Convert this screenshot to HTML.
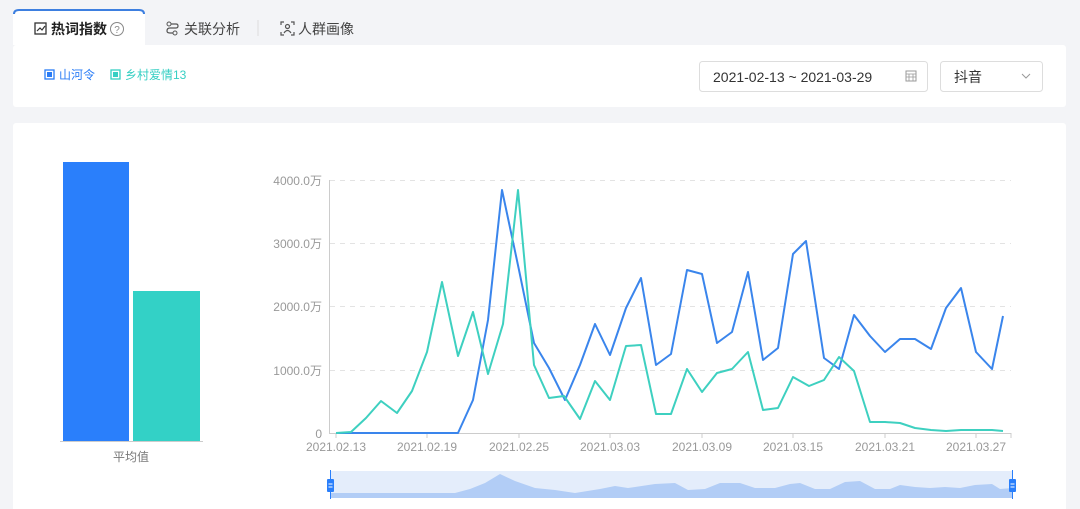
<!DOCTYPE html>
<html><head><meta charset="utf-8"><style>
*{margin:0;padding:0;box-sizing:border-box}
body{width:1080px;height:509px;background:#f3f4f7;font-family:"Liberation Sans","Noto Sans CJK SC",sans-serif;overflow:hidden;position:relative}
</style></head><body>
<svg width="1080" height="509" style="position:absolute;left:0;top:0" font-family="Liberation Sans, Noto Sans CJK SC, sans-serif">
<!-- tabs -->
<path d="M13 45 V15 Q13 10 18 10 H140 Q145 10 145 15 V45 Z" fill="#fff"/>
<path d="M14 14 Q14 10 19 10 H139 Q144 10 144 14" fill="none" stroke="#3d7fe0" stroke-width="2"/>
<rect x="13" y="45" width="1053" height="62" rx="3" fill="#fff"/>
<rect x="35" y="23" width="11" height="11" fill="none" stroke="#333" stroke-width="1.3"/>
<path d="M37 31 L40 28 L42 30 L45 26" fill="none" stroke="#333" stroke-width="1.2"/>
<text x="51" y="34" font-size="14" font-weight="bold" fill="#222">热词指数</text>
<circle cx="117" cy="29" r="6.5" fill="none" stroke="#888" stroke-width="1"/>
<text x="117" y="33" font-size="10" fill="#888" text-anchor="middle">?</text>
<circle cx="169" cy="24" r="2" fill="none" stroke="#555"/><circle cx="175" cy="33" r="2" fill="none" stroke="#555"/>
<path d="M171 24 H176 Q178 24 178 26 Q178 28 176 28 H170 Q167 28 167 31 Q167 33 170 33 H173" fill="none" stroke="#555" stroke-width="1.2"/>
<text x="184" y="34" font-size="14" fill="#444">关联分析</text>
<line x1="258" y1="20" x2="258" y2="36" stroke="#ddd"/>
<path d="M281 25 V22 H284 M291 22 H294 V25 M294 32 V35 H291 M284 35 H281 V32" fill="none" stroke="#555" stroke-width="1.2"/>
<circle cx="287.5" cy="26.5" r="2" fill="none" stroke="#555" stroke-width="1.2"/>
<path d="M284 33 Q287.5 28 291 33" fill="none" stroke="#555" stroke-width="1.2"/>
<text x="298" y="34" font-size="14" fill="#444">人群画像</text>
<!-- legend -->
<rect x="45" y="70" width="9" height="9" fill="#fff" stroke="#2a7cf6" stroke-width="1.3"/><rect x="47" y="72" width="5" height="5" fill="#2a7cf6"/>
<text x="59" y="79" font-size="12" fill="#2a7cf6">山河令</text>
<rect x="111" y="70" width="9" height="9" fill="#fff" stroke="#36cfc3" stroke-width="1.3"/><rect x="113" y="72" width="5" height="5" fill="#36cfc3"/>
<text x="125" y="79" font-size="12" fill="#36cfc3">乡村爱情13</text>
<!-- date picker -->
<rect x="699.5" y="61.5" width="228" height="30" rx="3" fill="#fff" stroke="#ddd"/>
<text x="713" y="82" font-size="14" fill="#333">2021-02-13 ~ 2021-03-29</text>
<rect x="906" y="71" width="10" height="10" fill="none" stroke="#999"/><path d="M906 74 H916 M906 77 H916 M909 74 V81 M913 74 V81" stroke="#999" stroke-width="0.8"/>
<rect x="940.5" y="61.5" width="102" height="30" rx="3" fill="#fff" stroke="#ddd"/>
<text x="954" y="82" font-size="14" fill="#333">抖音</text>
<path d="M1022 74 L1026 78 L1030 74" fill="none" stroke="#999"/>
<!-- main card -->
<rect x="13" y="123" width="1053" height="400" rx="3" fill="#fff"/>
<rect x="63" y="162" width="66" height="279" fill="#2a7ffb"/>
<rect x="133" y="291" width="67" height="150" fill="#33d1c6"/>
<line x1="60" y1="441.5" x2="203" y2="441.5" stroke="#ccc"/>
<text x="131" y="461" font-size="12" fill="#777" text-anchor="middle">平均值</text>
<!-- grid -->
<g stroke="#e3e3e3" stroke-dasharray="5,5">
<line x1="330" y1="180.5" x2="1011" y2="180.5"/><line x1="330" y1="243.5" x2="1011" y2="243.5"/>
<line x1="330" y1="306.5" x2="1011" y2="306.5"/><line x1="330" y1="370.5" x2="1011" y2="370.5"/></g>
<line x1="329.5" y1="180" x2="329.5" y2="433" stroke="#ccc"/>
<line x1="329" y1="433.5" x2="1011" y2="433.5" stroke="#ccc"/>
<g font-size="12" fill="#999" text-anchor="end">
<text x="322" y="185">4000.0万</text><text x="322" y="248">3000.0万</text><text x="322" y="311">2000.0万</text><text x="322" y="375">1000.0万</text><text x="322" y="438">0</text></g>
<g stroke="#ccc"><line x1="336" y1="433" x2="336" y2="438"/><line x1="427" y1="433" x2="427" y2="438"/><line x1="519" y1="433" x2="519" y2="438"/><line x1="610" y1="433" x2="610" y2="438"/><line x1="702" y1="433" x2="702" y2="438"/><line x1="793" y1="433" x2="793" y2="438"/><line x1="885" y1="433" x2="885" y2="438"/><line x1="976" y1="433" x2="976" y2="438"/><line x1="1011" y1="433" x2="1011" y2="438"/></g>
<g font-size="12" fill="#999" text-anchor="middle">
<text x="336" y="451">2021.02.13</text><text x="427" y="451">2021.02.19</text><text x="519" y="451">2021.02.25</text><text x="610" y="451">2021.03.03</text><text x="702" y="451">2021.03.09</text><text x="793" y="451">2021.03.15</text><text x="885" y="451">2021.03.21</text><text x="976" y="451">2021.03.27</text></g>
<polyline fill="none" stroke="#3a85ec" stroke-width="2" stroke-linejoin="round" points="336,433 458,433 473,400 488,320 502,190 519,270 534,343 549,368 565,400 580,365 595,324 610,355 626,308 641,278 656,365 671,354 687,270 702,274 717,343 732,332 748,272 763,360 778,348 793,254 806,241 824,358 839,369 854,315 870,336 885,352 900,339 915,339 931,349 946,308 961,288 976,352 992,369 1003,316"/>
<polyline fill="none" stroke="#3ed0c0" stroke-width="2" stroke-linejoin="round" points="336,433 351,432 366,418 381,401 397,413 412,391 427,352 442,282 458,356 473,312 488,374 503,324 518,190 534,365 549,398 564,396 580,419 595,381 610,400 626,346 641,345 656,414 671,414 687,369 702,392 717,373 732,369 748,352 763,410 778,408 793,377 809,386 824,380 839,357 854,371 870,422 885,422 900,423 915,428 931,430 946,431 961,430 976,430 992,430 1003,431"/>
<!-- datazoom -->
<rect x="330" y="471" width="683" height="27" fill="#e4edfb"/>
<path d="M330 498 V493 H455 L470 489 L485 483 L500 474 L515 481 L535 488 L555 490 L575 493 L600 489 L615 486 L628 488 L655 484 L675 483 L688 490 L705 489 L720 483 L740 483 L755 488 L775 488 L790 484 L800 483 L815 489 L830 489 L845 482 L860 481 L875 489 L890 489 L900 485 L915 487 L930 488 L945 487 L960 488 L975 485 L992 484 L1000 489 L1013 488 V498 Z" fill="#b2cdf6"/>
<line x1="330.5" y1="470" x2="330.5" y2="499" stroke="#2a7ffb"/><rect x="327" y="479" width="7" height="13" rx="1" fill="#2a7ffb"/>
<line x1="1012.5" y1="470" x2="1012.5" y2="499" stroke="#2a7ffb"/><rect x="1009" y="479" width="7" height="13" rx="1" fill="#2a7ffb"/>
<path d="M328.5 484 H332.5 M328.5 487 H332.5 M1010.5 484 H1014.5 M1010.5 487 H1014.5" stroke="#fff"/>
</svg>
</body></html>
